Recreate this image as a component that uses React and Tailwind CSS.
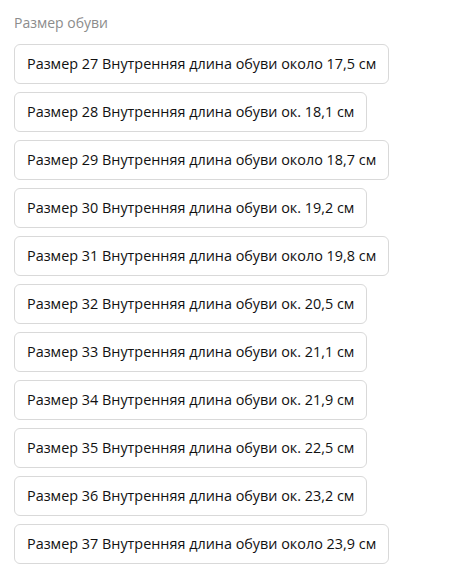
import React from 'react';

const sizes = [
  'Размер 27 Внутренняя длина обуви около 17,5 см',
  'Размер 28 Внутренняя длина обуви ок. 18,1 см',
  'Размер 29 Внутренняя длина обуви около 18,7 см',
  'Размер 30 Внутренняя длина обуви ок. 19,2 см',
  'Размер 31 Внутренняя длина обуви около 19,8 см',
  'Размер 32 Внутренняя длина обуви ок. 20,5 см',
  'Размер 33 Внутренняя длина обуви ок. 21,1 см',
  'Размер 34 Внутренняя длина обуви ок. 21,9 см',
  'Размер 35 Внутренняя длина обуви ок. 22,5 см',
  'Размер 36 Внутренняя длина обуви ок. 23,2 см',
  'Размер 37 Внутренняя длина обуви около 23,9 см',
];

export default function App() {
  return (
    <div className="min-h-screen w-full bg-white px-[14px] pt-[13px] font-['Open_Sans',sans-serif]">
      <div className="text-[14px] leading-5 text-[#8c8c8c] mb-[11px]">Размер обуви</div>
      <div className="flex flex-col items-start gap-2">
        {sizes.map((s, i) => (
          <button
            key={i}
            className="h-10 px-3 rounded-md border border-[#d9d9d9] bg-white text-[14.4px] text-[#111] whitespace-nowrap"
          >
            {s}
          </button>
        ))}
      </div>
    </div>
  );
}
